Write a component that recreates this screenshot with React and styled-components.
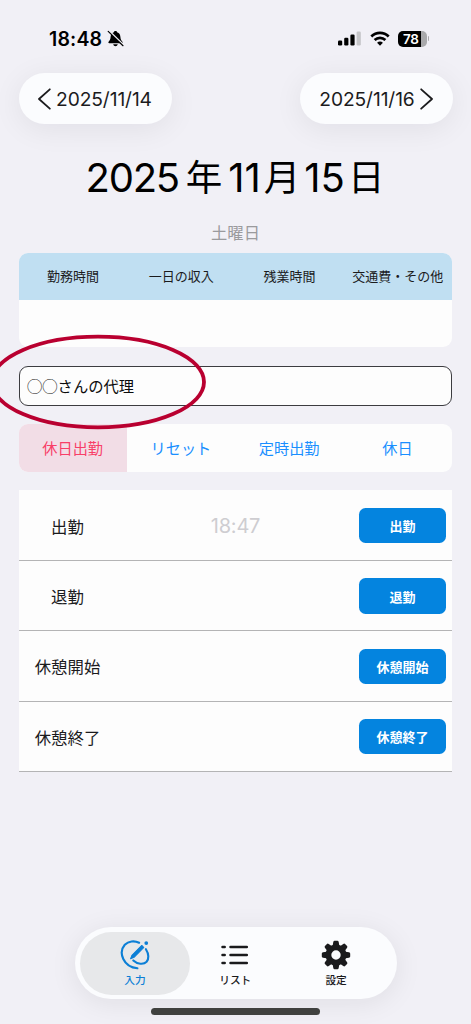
import React from 'react';
import styled, { createGlobalStyle } from 'styled-components';

const GlobalStyle = createGlobalStyle`
  *, *::before, *::after { box-sizing: border-box; }
  html, body { margin: 0; padding: 0; background: #f1f0f6; }
  body { font-family: Inter, "Noto Sans CJK JP", sans-serif; color: #1b1b1d; }
  button { font-family: inherit; border: 0; padding: 0; margin: 0; background: none; color: inherit; }
  svg { display: block; flex: none; }
`;

const Screen = styled.main`
  position: relative;
  display: flex;
  flex-direction: column;
  width: 471px;
  height: 1024px;
  overflow: hidden;
  background: #f1f0f6;
`;

const StatusBar = styled.header`
  display: flex;
  justify-content: space-between;
  align-items: center;
  height: 73px;
  padding: 4px 42px 0 49px;
`;

const StatusGroup = styled.div`
  display: flex;
  align-items: center;
  gap: ${(p) => p.$gap}px;
`;

const Clock = styled.span`
  font-size: 19.5px;
  line-height: 20px;
  font-weight: 600;
  letter-spacing: 0.15px;
  color: #000;
`;

const Battery = styled.div`
  display: flex;
  align-items: center;
  gap: 1px;
`;

const BatteryCell = styled.div`
  width: 29px;
  height: 16px;
  border-radius: 5px;
  background: linear-gradient(90deg, #000 0 23px, #a9a9ab 23px);
  color: #fff;
  font-size: 13.5px;
  font-weight: 600;
  line-height: 16px;
  padding-left: 5.5px;
  letter-spacing: -0.3px;
`;

const BatteryTip = styled.div`
  width: 1.5px;
  height: 5px;
  border-radius: 0 2px 2px 0;
  background: #a9a9ab;
`;

const DayNav = styled.nav`
  display: flex;
  justify-content: space-between;
  padding: 0 18.5px;
`;

const DayButton = styled.button`
  display: flex;
  align-items: center;
  justify-content: center;
  gap: 5px;
  width: 153px;
  height: 51px;
  border-radius: 26px;
  background: #fbfcfe;
  box-shadow: 0 5px 30px rgba(20, 20, 30, 0.07);
  font-size: 19.2px;
  letter-spacing: -0.1px;
`;

const DateTitle = styled.h1`
  display: flex;
  justify-content: center;
  align-items: center;
  height: 56px;
  margin: 26px 0 0;
  padding-right: 1px;
  color: #000;
  font-weight: 400;
`;

const Digits = styled.span`
  font-size: 40px;
  line-height: 56px;
  letter-spacing: ${(p) => p.$tracking || '0px'};
`;

const Unit = styled.span`
  font-size: 36.5px;
  line-height: 56px;
  margin: 0 ${(p) => p.$after || 0}px 0 ${(p) => p.$before || 0}px;
`;

const Weekday = styled.p`
  margin: 15px 0 7.5px;
  height: 24px;
  line-height: 24px;
  font-size: 16.3px;
  text-align: center;
  color: #9a9a9d;
`;

const Summary = styled.section`
  margin: 0 19px;
  height: 94.5px;
  border-radius: 9px;
  overflow: hidden;
  background: #fdfdfd;
`;

const SummaryHead = styled.div`
  display: grid;
  grid-template-columns: repeat(4, 1fr);
  height: 47px;
  line-height: 46px;
  background: #c0dff2;
  font-size: 13px;
  text-align: center;
  white-space: nowrap;
`;

const Memo = styled.div`
  margin: 19px 19px 0;
  height: 39.5px;
  padding-left: 7px;
  border: 1.4px solid #3c3c40;
  border-radius: 9px;
  background: #fdfdfd;
  font-family: "Noto Sans CJK JP", sans-serif;
  font-size: 15.3px;
  line-height: 36px;
  color: #0c0c0c;
`;

const Presets = styled.div`
  display: grid;
  grid-template-columns: repeat(4, 1fr);
  margin: 18.5px 19px 0;
  height: 47.5px;
  border-radius: 9px;
  overflow: hidden;
  background: #fdfdfd;
`;

const Preset = styled.button`
  font-size: 15.2px;
  line-height: 47px;
  padding: 1px 1px 0 0;
  color: ${(p) => (p.$selected ? '#f83f68' : '#1a8fff')};
  background: ${(p) => (p.$selected ? '#f2dde6' : 'transparent')};
`;

const Punches = styled.section`
  margin: 18.5px 19px 0;
  background: #fdfdfd;
`;

const PunchRow = styled.div`
  display: grid;
  grid-template-columns: 97px 1fr 87px;
  align-items: center;
  height: ${(p) => (p.$first ? 71 : 70.25)}px;
  padding: 1.2px 6px 0 0;
  border-bottom: 1.4px solid #b4b4b5;
`;

const PunchLabel = styled.span`
  font-size: 16.4px;
  text-align: center;
  white-space: nowrap;
`;

const PunchTime = styled.span`
  font-size: 20px;
  text-align: center;
  letter-spacing: -0.2px;
  color: #cecdd1;
  padding-right: 4px;
`;

const PunchButton = styled.button`
  height: 35.5px;
  border-radius: 6.5px;
  background: #0484df;
  color: #fff;
  font-size: 13px;
  font-weight: 600;
`;

const TabBar = styled.nav`
  display: flex;
  width: 321.5px;
  height: 72px;
  margin: auto 0 9px 75px;
  padding: 4.5px 5px;
  border-radius: 36px;
  background: #fbfcfe;
  box-shadow: 0 4px 28px rgba(20, 20, 30, 0.08);
`;

const Tab = styled.button`
  display: flex;
  flex-direction: column;
  align-items: center;
  width: ${(p) => p.$width}px;
  height: 63px;
  padding-top: 8px;
  border-radius: 32px;
  background: ${(p) => (p.$active ? '#e7e8ea' : 'transparent')};
  color: ${(p) => (p.$active ? '#0c7fd6' : '#1a1a1c')};
  font-size: 10.7px;
  font-weight: 500;
  line-height: 21px;
`;

const HomeIndicator = styled.div`
  width: 169px;
  height: 6.5px;
  margin: 0 auto 9.5px;
  border-radius: 4px;
  background: #40413f;
`;

const Marker = styled.svg`
  position: absolute;
  left: 0;
  top: 330px;
  pointer-events: none;
`;

const BellOff = () => (
  <svg width="17" height="17" viewBox="0 0 17 17">
    <path d="M8.5 1c-.9 0-1.5.5-1.6 1.200C4.600 2.900 3.700 4.700 3.600 7c-.1 2.500-.9 3.500-2 4.700-.5.7-.2 1.500.6 1.500h12.600c.8 0 1.100-.8.6-1.500-1.100-1.200-1.900-2.200-2-4.700-.1-2.300-1-4.100-3.300-4.800C10 1.500 9.400 1 8.500 1z" fill="#000" />
    <path d="M6.200 14.200h4.600c-.3 1.300-1.200 2-2.300 2s-2-.7-2.300-2z" fill="#000" />
    <path d="M2 .900 16.400 14.900" stroke="#f1f0f6" strokeWidth="1.800" />
    <path d="M1.200 1.400 16 15.700" stroke="#000" strokeWidth="1.200" strokeLinecap="round" />
  </svg>
);

const Signal = () => (
  <svg width="24" height="15" viewBox="0 0 24 15">
    <rect x="0" y="9.500" width="4.200" height="5" rx="1.200" />
    <rect x="6.200" y="6.800" width="4.200" height="7.700" rx="1.200" />
    <rect x="12.400" y="3.600" width="4.200" height="10.900" rx="1.200" />
    <rect x="18.600" y="0.500" width="4.200" height="14" rx="1.200" fill="#c5c5c8" />
  </svg>
);

const Wifi = () => (
  <svg width="20" height="15" viewBox="0 0 20 15" fill="none" stroke="#000" strokeWidth="2.700">
    <path d="M1.300 5.500C6.300.700 13.700.700 18.700 5.500" />
    <path d="M4.600 9C7.700 6.100 12.300 6.100 15.400 9" />
    <path d="M10 14.700 7.100 11.700C8.800 10.200 11.200 10.200 12.900 11.700z" fill="#000" stroke="none" />
  </svg>
);

const Chevron = ({ right }) => (
  <svg width="13" height="22" viewBox="0 0 13 22" fill="none" stroke="#1b1b1d" strokeWidth="1.800" strokeLinecap="round" strokeLinejoin="round">
    <path d={right ? 'M1.200 1.300 12 11 1.200 20.700' : 'M11.800 1.300 1 11l10.800 9.700'} />
  </svg>
);

const PenIcon = () => (
  <svg width="30" height="30" viewBox="0 0 88 88" fill="none" stroke="currentColor" strokeWidth="6.200" strokeLinecap="round">
    <path d="M56 8C42 1 25 3 14 14C-6 37 10 79 51 83" />
    <path d="M76 27C85 41 85 56 78 64C69 73 51 71 39 60" />
    <path d="M31 55 35 45 64 16 70 22 41 51Z" fill="currentColor" strokeWidth="3" strokeLinejoin="round" />
    <circle cx="77" cy="9" r="5.500" fill="currentColor" stroke="none" />
  </svg>
);

const ListIcon = () => (
  <svg width="30" height="30" viewBox="0 0 30 30" stroke="currentColor" strokeWidth="2.500" strokeLinecap="round">
    <path d="M2.500 7h2.200M2.500 15h2.200M2.500 23h2.200M10.500 7h16.300M10.500 15h16.300M10.500 23h16.300" />
  </svg>
);

const GearIcon = () => (
  <svg width="30" height="30" viewBox="-15 -15 30 30" fill="currentColor">
    {[0, 45, 90, 135].map((angle) => (
      <path key={angle} transform={`rotate(${angle})`} d="M-3.300 -9.500-2.700-13Q-2.400-14.200-1.400-14.200H1.400Q2.400-14.200 2.700-13L3.300-9.500V-6H-3.300ZM-3.300 9.500-2.700 13Q-2.400 14.200-1.400 14.200H1.400Q2.400 14.200 2.700 13L3.300 9.500V6H-3.300Z" />
    ))}
    <circle r="7.600" fill="none" stroke="currentColor" strokeWidth="5.800" />
  </svg>
);

const headings = ['勤務時間', '一日の収入', '残業時間', '交通費・その他'];
const presets = ['休日出勤', 'リセット', '定時出勤', '休日'];
const punches = [
  { label: '出勤', time: '18:47' },
  { label: '退勤' },
  { label: '休憩開始' },
  { label: '休憩終了' },
];

export default function App() {
  return (
    <>
      <GlobalStyle />
      <Screen lang="ja">
        <StatusBar>
          <StatusGroup $gap={5}>
            <Clock>18:48</Clock>
            <BellOff />
          </StatusGroup>
          <StatusGroup $gap={8}>
            <Signal />
            <Wifi />
            <Battery>
              <BatteryCell>78</BatteryCell>
              <BatteryTip />
            </Battery>
          </StatusGroup>
        </StatusBar>

        <DayNav>
          <DayButton><Chevron />2025/11/14</DayButton>
          <DayButton>2025/11/16<Chevron right /></DayButton>
        </DayNav>

        <DateTitle>
          <Digits $tracking="-1.3px">2025</Digits>
          <Unit $before={7} $after={6}>年</Unit>
          <Digits>11</Digits>
          <Unit $before={3} $after={4}>月</Unit>
          <Digits>15</Digits>
          <Unit $before={3}>日</Unit>
        </DateTitle>
        <Weekday>土曜日</Weekday>

        <Summary>
          <SummaryHead>
            {headings.map((text) => <span key={text}>{text}</span>)}
          </SummaryHead>
        </Summary>

        <Memo>◯◯さんの代理</Memo>

        <Presets>
          {presets.map((text, i) => (
            <Preset key={text} $selected={i === 0}>{text}</Preset>
          ))}
        </Presets>

        <Punches>
          {punches.map(({ label, time }, i) => (
            <PunchRow key={label} $first={i === 0}>
              <PunchLabel>{label}</PunchLabel>
              <PunchTime>{time}</PunchTime>
              <PunchButton>{label}</PunchButton>
            </PunchRow>
          ))}
        </Punches>

        <TabBar>
          <Tab $active $width={110}><PenIcon />入力</Tab>
          <Tab $width={91}><ListIcon />リスト</Tab>
          <Tab $width={111}><GearIcon />設定</Tab>
        </TabBar>
        <HomeIndicator />

        <Marker width="212" height="104" viewBox="0 0 212 104" fill="none">
          <ellipse cx="98" cy="52" rx="106" ry="45.300" stroke="#b90030" strokeWidth="3.800" />
        </Marker>
      </Screen>
    </>
  );
}
